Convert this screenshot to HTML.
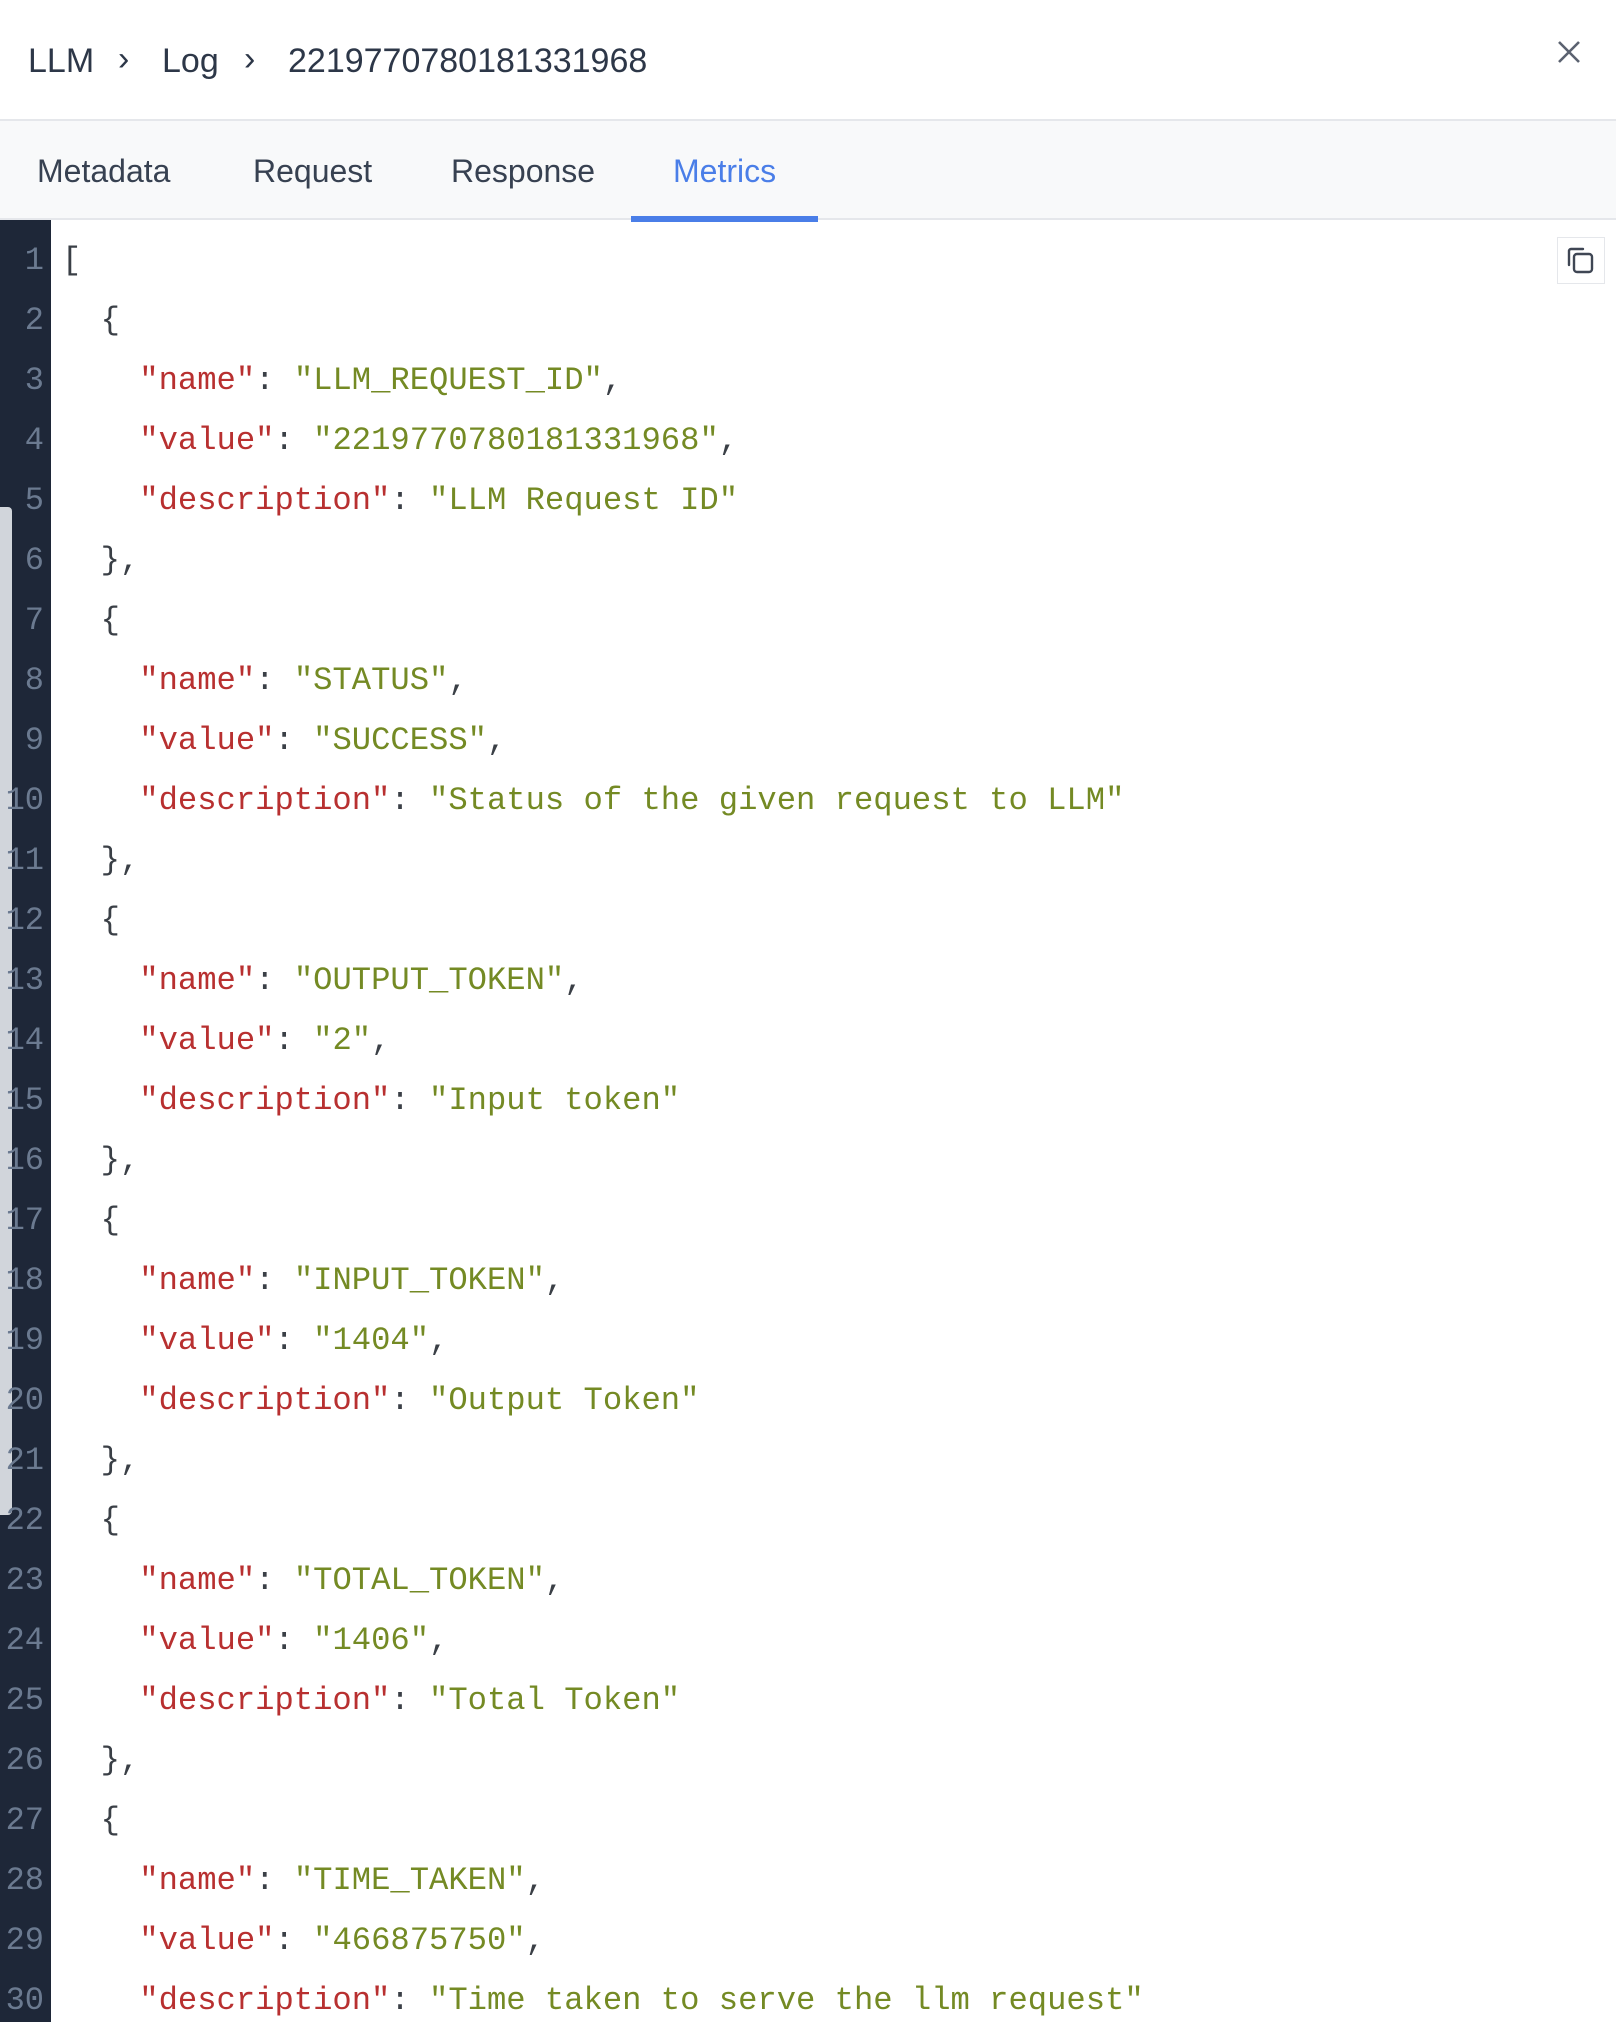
<!DOCTYPE html>
<html><head><meta charset="utf-8"><style>
*{margin:0;padding:0;box-sizing:border-box}
body{width:1616px;height:2022px;overflow:hidden;background:#fff;font-family:"Liberation Sans",sans-serif;position:relative}
.hdr{height:121px;border-bottom:2px solid #e5e7eb;position:relative}
.bc{position:absolute;left:28px;top:42px;font-size:34px;color:#2d3748;white-space:nowrap}
.bc span{display:inline-block}
.tabs{position:absolute;top:121px;left:0;width:1616px;height:99px;background:#f8f9fa;border-bottom:2px solid #e5e7eb}
.tab{position:absolute;top:32px;font-size:32px;color:#374151}
.ul{position:absolute;left:631px;width:187px;top:216px;height:6px;background:#4a7ee8}
.gut{position:absolute;left:0;top:220px;width:51px;height:1802px;background:#1e2738}
.thumb{position:absolute;left:0;top:507px;width:12px;height:1008px;background:#d1d5db;border-radius:0 4px 4px 0}
.ln{position:absolute;left:0;width:44px;text-align:right;font-family:"Liberation Mono",monospace;font-size:32px;color:#6b7a90;line-height:60px}
.code{position:absolute;left:62px;top:231px;font-family:"Liberation Mono",monospace;font-size:32.2px;line-height:60px;color:#3a3f46;white-space:pre}
.k{color:#b83030}.s{color:#748a24}
</style></head><body>
<div class="hdr">
<div class="bc"><span style="position:absolute;left:0">LLM</span><span style="position:absolute;left:90px;top:-2px">›</span><span style="position:absolute;left:134px">Log</span><span style="position:absolute;left:216px;top:-2px">›</span><span style="position:absolute;left:260px">2219770780181331968</span></div>
<svg style="position:absolute;left:1556px;top:39px" width="26" height="26" viewBox="0 0 26 26"><path d="M3 3L23 23M23 3L3 23" stroke="#5b6270" stroke-width="2.6"/></svg>
</div>
<div class="tabs">
<div class="tab" style="left:37px">Metadata</div>
<div class="tab" style="left:253px">Request</div>
<div class="tab" style="left:451px">Response</div>
<div class="tab" style="left:673px;color:#4a7ee8">Metrics</div>
</div>
<div class="ul"></div>
<div class="gut"></div>
<div class="thumb"></div>
<div class="ln" style="top:231px">1<br>2<br>3<br>4<br>5<br>6<br>7<br>8<br>9<br>10<br>11<br>12<br>13<br>14<br>15<br>16<br>17<br>18<br>19<br>20<br>21<br>22<br>23<br>24<br>25<br>26<br>27<br>28<br>29<br>30</div>
<div class="code">[
  {
    <span class="k">"name"</span>: <span class="s">"LLM_REQUEST_ID"</span>,
    <span class="k">"value"</span>: <span class="s">"2219770780181331968"</span>,
    <span class="k">"description"</span>: <span class="s">"LLM Request ID"</span>
  },
  {
    <span class="k">"name"</span>: <span class="s">"STATUS"</span>,
    <span class="k">"value"</span>: <span class="s">"SUCCESS"</span>,
    <span class="k">"description"</span>: <span class="s">"Status of the given request to LLM"</span>
  },
  {
    <span class="k">"name"</span>: <span class="s">"OUTPUT_TOKEN"</span>,
    <span class="k">"value"</span>: <span class="s">"2"</span>,
    <span class="k">"description"</span>: <span class="s">"Input token"</span>
  },
  {
    <span class="k">"name"</span>: <span class="s">"INPUT_TOKEN"</span>,
    <span class="k">"value"</span>: <span class="s">"1404"</span>,
    <span class="k">"description"</span>: <span class="s">"Output Token"</span>
  },
  {
    <span class="k">"name"</span>: <span class="s">"TOTAL_TOKEN"</span>,
    <span class="k">"value"</span>: <span class="s">"1406"</span>,
    <span class="k">"description"</span>: <span class="s">"Total Token"</span>
  },
  {
    <span class="k">"name"</span>: <span class="s">"TIME_TAKEN"</span>,
    <span class="k">"value"</span>: <span class="s">"466875750"</span>,
    <span class="k">"description"</span>: <span class="s">"Time taken to serve the llm request"</span></div>
<div style="position:absolute;left:1557px;top:237px;width:48px;height:47px;border:1px solid #e5e7eb;background:#fff"></div>
<svg style="position:absolute;left:1565px;top:245px" width="32" height="32" viewBox="0 0 32 32"><path d="M4 20V6a2 2 0 0 1 2-2h12" fill="none" stroke="#3f4654" stroke-width="2.4" stroke-linecap="round"/><rect x="9" y="9" width="18" height="18" rx="3" fill="none" stroke="#3f4654" stroke-width="2.4"/></svg>
</body></html>
